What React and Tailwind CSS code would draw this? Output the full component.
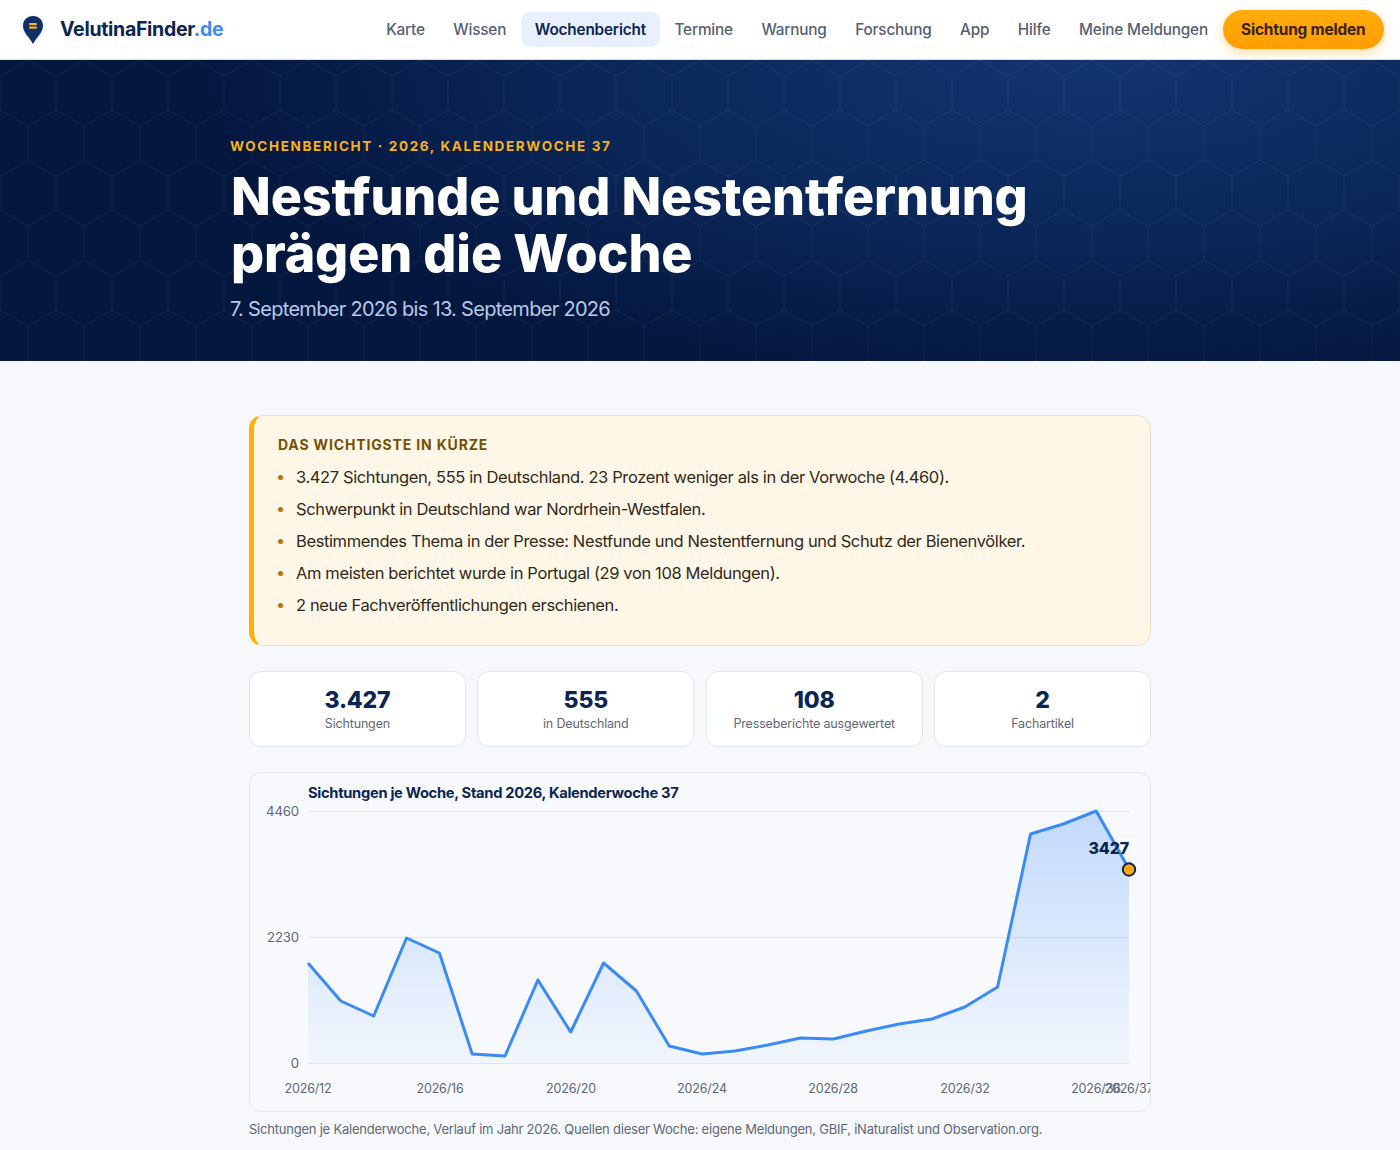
import React from 'react';

const navLinks = ['Karte', 'Wissen', 'Wochenbericht', 'Termine', 'Warnung', 'Forschung', 'App', 'Hilfe', 'Meine Meldungen'];

const summary = [
  '3.427 Sichtungen, 555 in Deutschland. 23 Prozent weniger als in der Vorwoche (4.460).',
  'Schwerpunkt in Deutschland war Nordrhein-Westfalen.',
  'Bestimmendes Thema in der Presse: Nestfunde und Nestentfernung und Schutz der Bienenvölker.',
  'Am meisten berichtet wurde in Portugal (29 von 108 Meldungen).',
  '2 neue Fachveröffentlichungen erschienen.',
];

const stats = [
  ['3.427', 'Sichtungen'],
  ['555', 'in Deutschland'],
  ['108', 'Presseberichte ausgewertet'],
  ['2', 'Fachartikel'],
];

// y positions of the weekly values inside the chart svg (weeks 12 to 37)
const ys = [190, 228, 243, 165, 180, 281, 283, 207, 259, 190, 218, 273, 281, 278, 272, 265, 266, 258, 251, 246, 234, 214, 61, 51, 38, 96];
const xAt = (i) => 58 + i * 32.84;
const linePts = ys.map((y, i) => `${xAt(i).toFixed(1)},${y}`).join(' ');
const areaPts = `58,290 ${linePts} 879,290`;
const xLabels = [['2026/12', 58], ['2026/16', 190], ['2026/20', 321], ['2026/24', 452], ['2026/28', 583], ['2026/32', 715], ['2026/36', 846], ['2026/37', 879]];

function Logo() {
  return (
    <svg width="22" height="30" viewBox="0 0 22 30" className="drop-shadow-sm">
      <path d="M11 1C5.2 1 1 5.3 1 10.8c0 6.6 6.6 11.8 10 18.2 3.4-6.4 10-11.6 10-18.2C21 5.3 16.800 1 11 1z" fill="#0f2f66" />
      <rect x="7" y="8" width="8" height="2.200" rx="1" fill="#f5b21a" />
      <rect x="7" y="11.600" width="8" height="2.200" rx="1" fill="#f5b21a" />
    </svg>
  );
}

function HexPattern() {
  return (
    <svg className="absolute inset-0 w-full h-full" aria-hidden="true">
      <defs>
        <pattern id="hex" width="56" height="100" patternUnits="userSpaceOnUse">
          <path d="M28 66L0 50L0 16L28 0L56 16L56 50L28 66L28 100" fill="none" stroke="#ffffff" strokeOpacity="0.055" strokeWidth="1" />
        </pattern>
      </defs>
      <rect width="100%" height="100%" fill="url(#hex)" />
    </svg>
  );
}

function Chart() {
  return (
    <svg width="900" height="338" viewBox="0 0 900 338" className="block overflow-hidden" style={{ fontFamily: 'Inter, sans-serif' }}>
      <defs>
        <linearGradient id="area" x1="0" y1="0" x2="0" y2="1">
          <stop offset="0%" stopColor="#3b8bf6" stopOpacity="0.28" />
          <stop offset="100%" stopColor="#3b8bf6" stopOpacity="0.03" />
        </linearGradient>
      </defs>
      <text x="58" y="25" fontSize="14.700" fontWeight="700" fill="#0b2554" letterSpacing="-0.3">Sichtungen je Woche, Stand 2026, Kalenderwoche 37</text>
      <line x1="58" x2="879" y1="38.500" y2="38.500" stroke="#e2e6ec" />
      <line x1="58" x2="879" y1="164.500" y2="164.500" stroke="#e2e6ec" />
      <line x1="58" x2="879" y1="290.500" y2="290.500" stroke="#e2e6ec" />
      <text x="49" y="42.500" textAnchor="end" fontSize="13.200" fill="#5f6875">4460</text>
      <text x="49" y="168.500" textAnchor="end" fontSize="13.200" fill="#5f6875">2230</text>
      <text x="49" y="294.500" textAnchor="end" fontSize="13.200" fill="#5f6875">0</text>
      <polygon points={areaPts} fill="url(#area)" />
      <polyline points={linePts} fill="none" stroke="#3b8bf6" strokeWidth="3" strokeLinejoin="round" />
      <circle cx="879" cy="96.500" r="6.200" fill="#ffa90a" stroke="#0b2554" strokeWidth="2" />
      <text x="879" y="81" textAnchor="end" fontSize="16" fontWeight="800" fill="#0b2554">3427</text>
      {xLabels.map(([label, x]) => (
        <text key={label} x={x} y="320" textAnchor="middle" fontSize="12.500" fill="#5f6875">{label}</text>
      ))}
    </svg>
  );
}

export default function App() {
  return (
    <div className="min-h-[1150px] bg-[#f6f8fc] font-['Inter',sans-serif] tracking-[-0.01em] overflow-hidden">
      <header className="h-[60px] bg-white border-b border-[#d9dfe9] flex items-center pl-[22px] pr-4 relative z-10">
        <div className="flex items-center gap-[16px]">
          <Logo />
          <span className="text-[19.500px] font-bold tracking-[-0.015em] text-[#0b2554]">VelutinaFinder<span className="text-[#3b8bf6]">.de</span></span>
        </div>
        <nav className="ml-auto flex items-center gap-[0.5px]">
          {navLinks.map((link) => (
            <a
              key={link}
              className={`px-[14px] py-[6px] rounded-[9px] text-[15.300px] leading-[23px] font-medium ${link === 'Wochenbericht' ? 'bg-[#e8f0fe] text-[#0b2554] font-semibold' : 'text-[#556072]'}`}
            >
              {link}
            </a>
          ))}
          <a className="h-[39px] px-[18.500px] flex items-center rounded-full bg-gradient-to-b from-[#ffac0c] to-[#ff9d00] text-[15.400px] font-bold text-[#3a2100] shadow-[0_4px_12px_rgba(255,160,0,0.35)]">
            Sichtung melden
          </a>
        </nav>
      </header>

      <section className="relative h-[301px] bg-[#04173f] bg-[radial-gradient(ellipse_900px_320px_at_78%_0%,#123470_0%,#0b2759_55%,#04173f_100%)] overflow-hidden">
        <HexPattern />
        <div className="relative pl-[230px] pt-[78px]">
          <p className="text-[13.500px] leading-[17px] font-bold tracking-[0.122em] text-[#f8b217]">WOCHENBERICHT · 2026, KALENDERWOCHE 37</p>
          <h1 className="mt-[13px] ml-[1px] text-[52px] leading-[57px] font-extrabold tracking-[-0.003em] text-white">
            Nestfunde und Nestentfernung<br />prägen die Woche
          </h1>
          <p className="mt-[13px] text-[20px] leading-[28px] font-normal tracking-[-0.035em] text-[#b9c9e6]">7. September 2026 bis 13. September 2026</p>
        </div>
      </section>

      <main className="w-[902px] mx-auto pt-[54px]">
        <section className="h-[231px] rounded-[14px] border border-[#f0e3c2] border-l-[5px] border-l-[#ffb000] bg-[#fef7e8] pl-[24px] pt-[20px]">
          <h2 className="text-[14px] leading-[17px] font-bold tracking-[0.06em] text-[#735200]">DAS WICHTIGSTE IN KÜRZE</h2>
          <ul className="mt-[8px]">
            {summary.map((item) => (
              <li key={item} className="h-[32px] flex items-center text-[16.500px] tracking-[-0.023em] text-[#33291a]">
                <span className="w-[5px] h-[5px] rounded-full bg-[#b8720f] mr-[13px] shrink-0" />
                {item}
              </li>
            ))}
          </ul>
        </section>

        <div className="mt-[25px] grid grid-cols-4 gap-[11.600px]">
          {stats.map(([value, label]) => (
            <div key={label} className="h-[76px] rounded-[12px] border border-[#e1e5ec] bg-white flex flex-col items-center pt-[14px]">
              <div className="text-[23px] leading-[29px] font-extrabold text-[#0b2554]">{value}</div>
              <div className="text-[12.500px] leading-[16px] mt-[1px] text-[#5f6875]">{label}</div>
            </div>
          ))}
        </div>

        <figure className="mt-[25px]">
          <div className="h-[340px] rounded-[12px] border border-[#e1e5ec] bg-[#f7f9fd] overflow-hidden">
            <Chart />
          </div>
          <figcaption className="mt-[8px] text-[13px] leading-[18px] tracking-[-0.017em] text-[#5f6875]">
            Sichtungen je Kalenderwoche, Verlauf im Jahr 2026. Quellen dieser Woche: eigene Meldungen, GBIF, iNaturalist und Observation.org.
          </figcaption>
        </figure>
      </main>
    </div>
  );
}
